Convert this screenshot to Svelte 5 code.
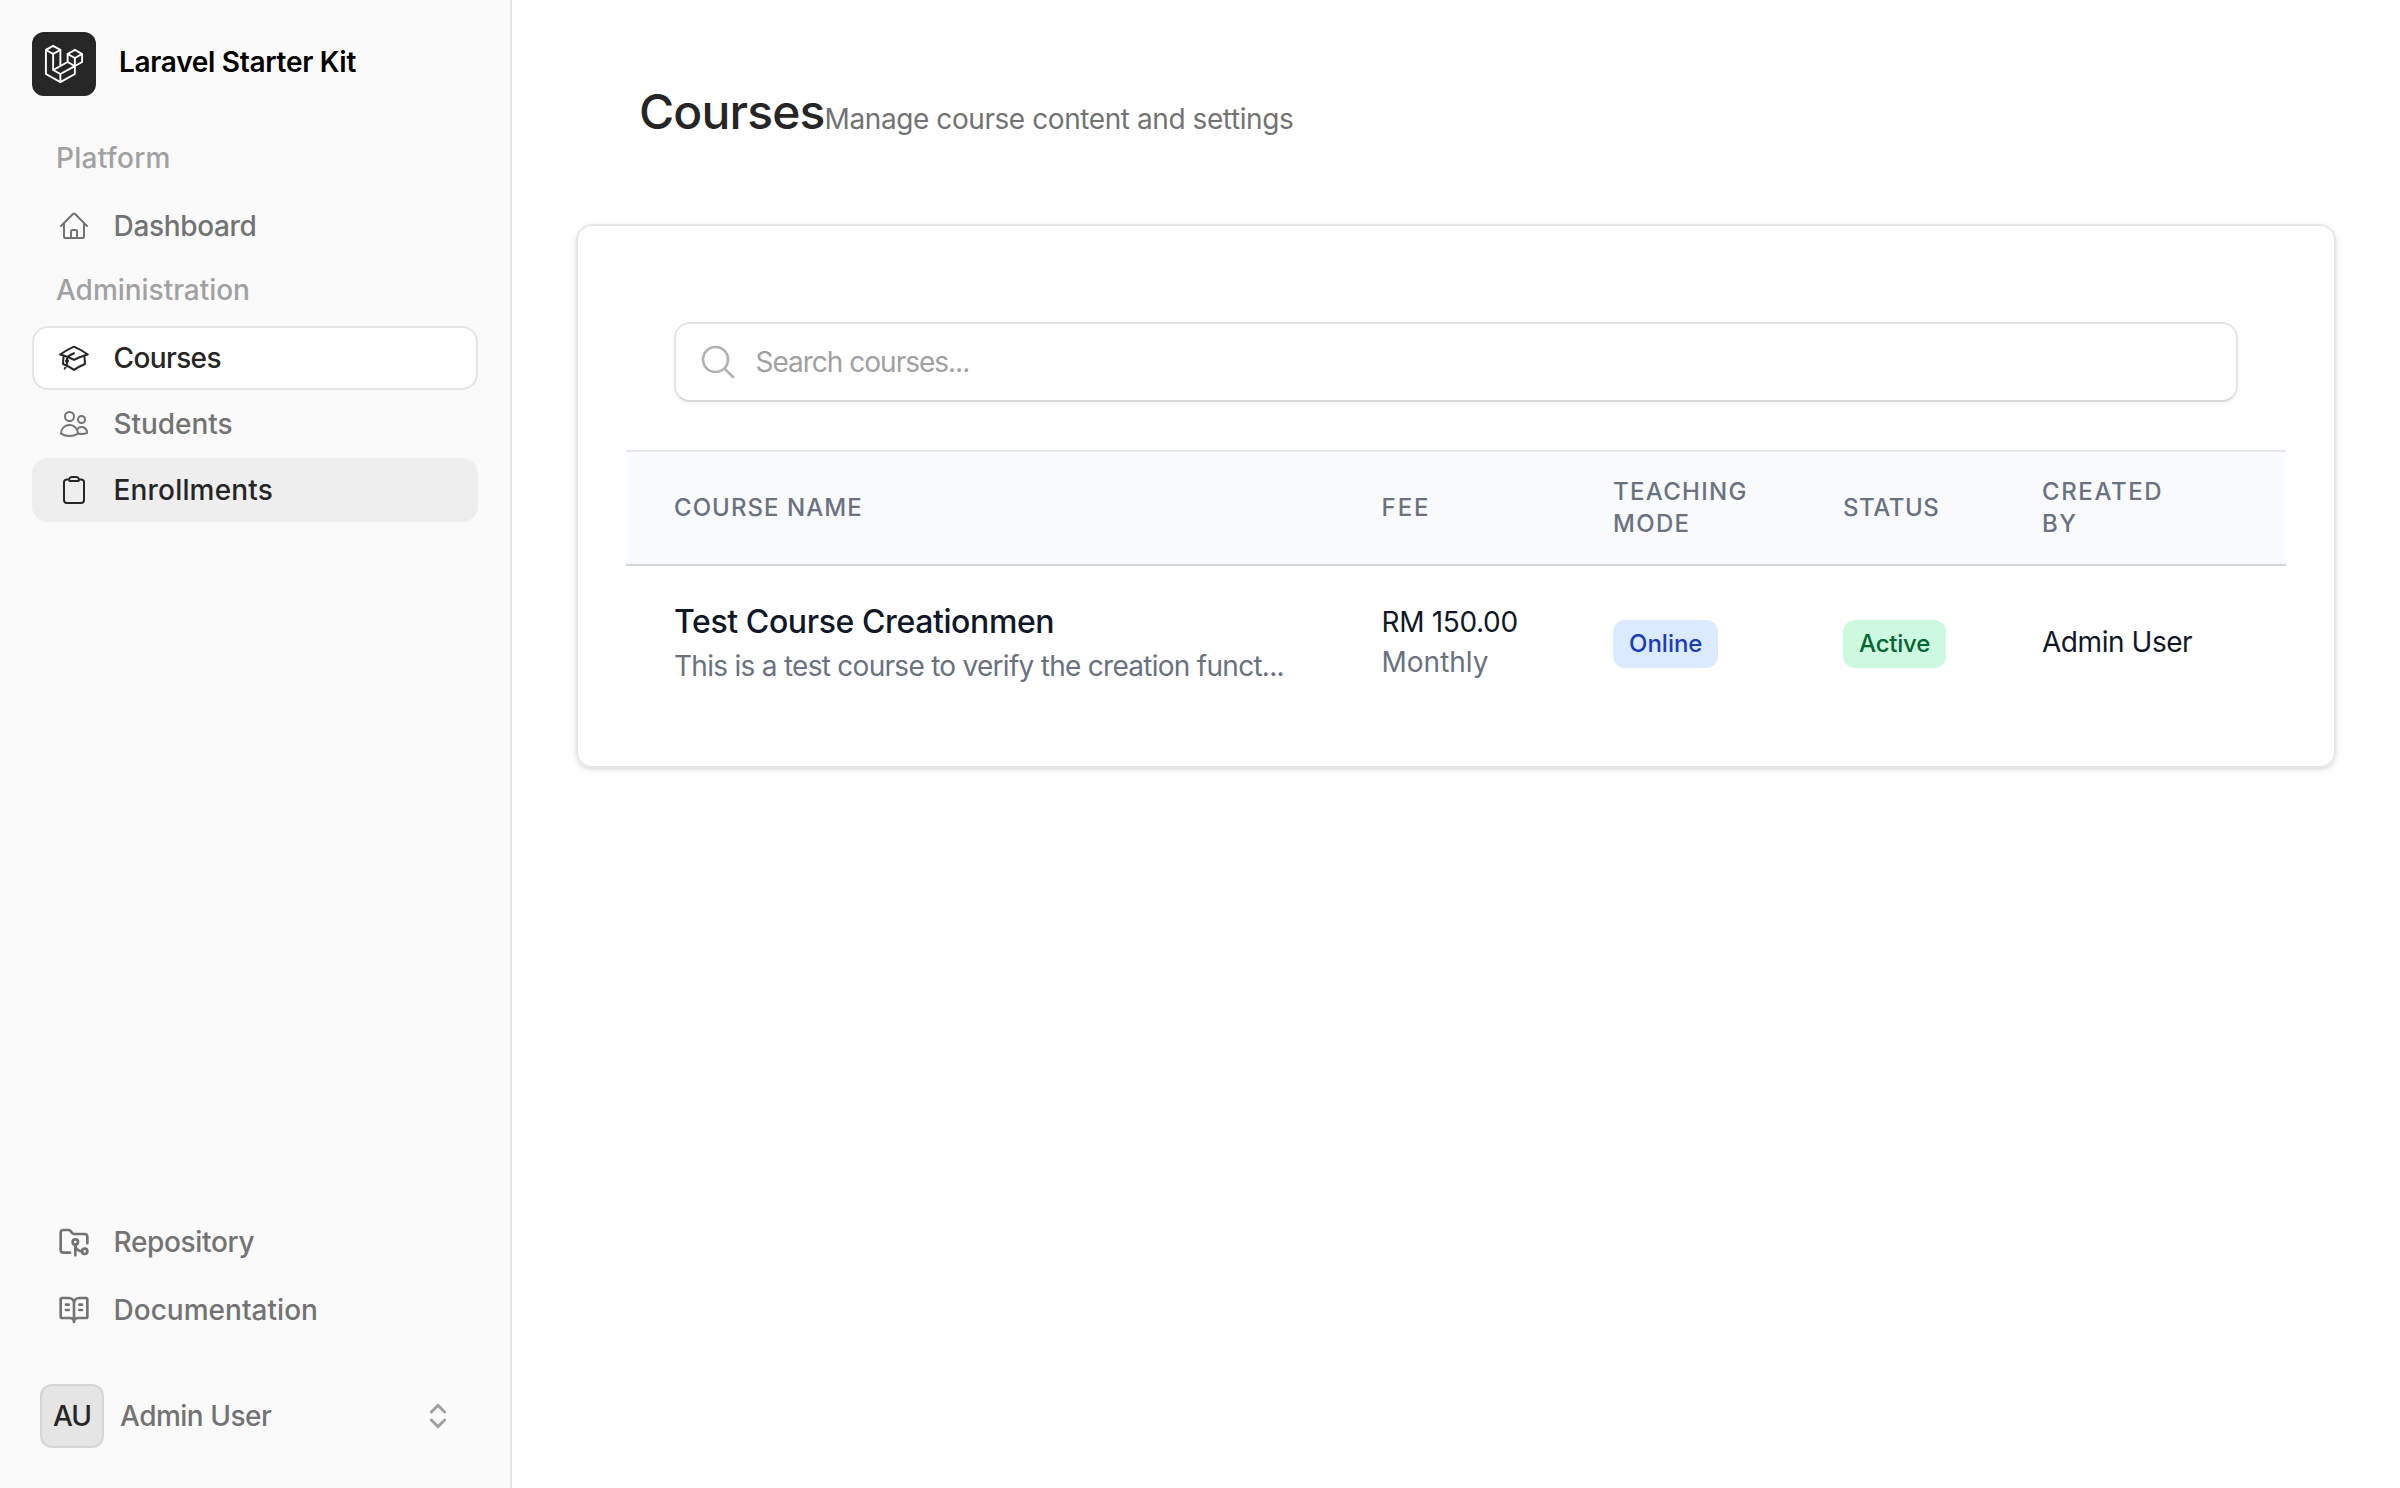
<script>
  const platform = [{ label: 'Dashboard', icon: 'home', track: -0.33 }];
  const administration = [
    { label: 'Courses', icon: 'cap', track: -0.62, state: 'current' },
    { label: 'Students', icon: 'users', track: -0.05 },
    { label: 'Enrollments', icon: 'clipboard', track: 0.18, state: 'hover' }
  ];
  const links = [
    { label: 'Repository', icon: 'folder', track: -0.33 },
    { label: 'Documentation', icon: 'book', track: 0.02 }
  ];
  const columns = [
    { label: 'Course name', track: 1.05 },
    { label: 'Fee', track: 2 },
    { label: 'Teaching mode', track: 1.3 },
    { label: 'Status', track: 0.57 },
    { label: 'Created by', track: 1.6 }
  ];
  const courses = [
    {
      name: 'Test Course Creationmen',
      description: 'This is a test course to verify the creation funct...',
      fee: 'RM 150.00',
      period: 'Monthly',
      mode: 'Online',
      status: 'Active',
      author: 'Admin User'
    }
  ];
</script>

{#snippet icon(name)}
  <svg class="icon" class:lucide={name === 'folder' || name === 'book'} viewBox="0 0 24 24" aria-hidden="true">
    {#if name === 'home'}
      <path d="m2.25 12 8.954-8.955c.44-.439 1.152-.439 1.591 0L21.75 12M4.5 9.75v10.125c0 .621.504 1.125 1.125 1.125H9.75v-4.875c0-.621.504-1.125 1.125-1.125h2.25c.621 0 1.125.504 1.125 1.125V21h4.125c.621 0 1.125-.504 1.125-1.125V9.75M8.25 21h8.25" />
    {:else if name === 'cap'}
      <path d="M4.26 10.147a60.438 60.438 0 0 0-.491 6.347A48.62 48.62 0 0 1 12 20.904a48.62 48.62 0 0 1 8.232-4.41 60.46 60.46 0 0 0-.491-6.347m-15.482 0a50.636 50.636 0 0 0-2.658-.813A59.906 59.906 0 0 1 12 3.493a59.903 59.903 0 0 1 10.399 5.84c-.896.248-1.783.52-2.658.814m-15.482 0A50.717 50.717 0 0 1 12 13.489a50.702 50.702 0 0 1 7.74-3.342M6.75 15a.75.75 0 1 0 0-1.5.75.75 0 0 0 0 1.5Zm0 0v-3.675A55.378 55.378 0 0 1 12 8.443m-7.007 11.55A5.981 5.981 0 0 0 6.75 15.75v-1.5" />
    {:else if name === 'users'}
      <path d="M15 19.128a9.38 9.38 0 0 0 2.625.372 9.337 9.337 0 0 0 4.121-.952 4.125 4.125 0 0 0-7.533-2.493M15 19.128v-.003c0-1.113-.285-2.16-.786-3.07M15 19.128v.106A12.318 12.318 0 0 1 8.624 21c-2.331 0-4.512-.645-6.374-1.766l-.001-.109a6.375 6.375 0 0 1 11.964-3.07M12 6.375a3.375 3.375 0 1 1-6.75 0 3.375 3.375 0 0 1 6.75 0Zm8.25 2.25a2.625 2.625 0 1 1-5.25 0 2.625 2.625 0 0 1 5.25 0Z" />
    {:else if name === 'clipboard'}
      <path d="M15.666 3.888A2.25 2.25 0 0 0 13.5 2.25h-3c-1.03 0-1.9.693-2.166 1.638m7.332 0c.055.194.084.4.084.612v0a.75.75 0 0 1-.75.75H9a.75.75 0 0 1-.75-.75v0c0-.212.03-.418.084-.612m7.332 0c.646.049 1.288.11 1.927.184 1.1.128 1.907 1.077 1.907 2.185V19.5a2.25 2.25 0 0 1-2.25 2.25H6.75A2.25 2.25 0 0 1 4.5 19.5V6.257c0-1.108.806-2.057 1.907-2.185a48.208 48.208 0 0 1 1.927-.184" />
    {:else if name === 'folder'}
      <path d="M9 20H4a2 2 0 0 1-2-2V5a2 2 0 0 1 2-2h3.9a2 2 0 0 1 1.69.9l.81 1.2a2 2 0 0 0 1.67.9H20a2 2 0 0 1 2 2v5" />
      <path d="M18 19c-2.8 0-5-2.2-5-5v8" />
      <circle cx="13" cy="12" r="2" />
      <circle cx="20" cy="19" r="2" />
    {:else if name === 'book'}
      <path d="M12 7v14M16 12h2M16 8h2M6 12h2M6 8h2M3 18a1 1 0 0 1-1-1V4a1 1 0 0 1 1-1h5a4 4 0 0 1 4 4 4 4 0 0 1 4-4h5a1 1 0 0 1 1 1v13a1 1 0 0 1-1 1h-6a3 3 0 0 0-3 3 3 3 0 0 0-3-3z" />
    {/if}
  </svg>
{/snippet}

{#snippet navItem(item)}
  <a class="item {item.state ?? ''}" href="#{item.icon}">
    {@render icon(item.icon)}
    <span style="letter-spacing: {item.track}px">{item.label}</span>
  </a>
{/snippet}

<div class="app">
  <aside>
    <a class="brand" href="#home">
      <span class="logo">
        <svg viewBox="0 0 40 42" aria-hidden="true">
          <path fill="currentColor" fill-rule="evenodd" clip-rule="evenodd" d="M17.2 5.633 8.6.855 0 5.633v26.51l16.2 9 16.2-9v-8.442l7.6-4.223V9.856l-8.6-4.777-8.6 4.777V18.3l-5.6 3.111V5.633ZM38 18.301l-5.6 3.11v-6.157l5.6-3.11V18.3Zm-1.06-7.856-5.54 3.078-5.54-3.079 5.54-3.078 5.54 3.079ZM24.8 18.3v-6.157l5.6 3.111v6.158L24.8 18.3Zm-1 1.732 5.54 3.078-13.14 7.302-5.54-3.078 13.14-7.3v-.002Zm-16.2 7.89 7.6 4.222V38.3L2 30.966V7.92l5.6 3.111v16.892ZM8.6 9.3 3.06 6.222 8.6 3.143l5.54 3.08L8.6 9.3Zm21.8 15.51-13.2 7.334V38.3l13.2-7.334v-6.156ZM9.6 11.034l5.6-3.11v14.6l-5.6 3.11v-14.6Z" />
        </svg>
      </span>
      <span class="brand-name">Laravel Starter Kit</span>
    </a>

    <nav class="main-nav">
      <h2 class="platform">Platform</h2>
      <div class="group">
        {#each platform as item}{@render navItem(item)}{/each}
      </div>
      <h2>Administration</h2>
      <div class="group">
        {#each administration as item}{@render navItem(item)}{/each}
      </div>
    </nav>

    <nav class="links">
      {#each links as item}{@render navItem(item)}{/each}
    </nav>

    <button class="profile">
      <span class="avatar">AU</span>
      <span class="profile-name">Admin User</span>
      <svg class="chevrons" viewBox="0 0 16 26" aria-hidden="true">
        <path d="M1.3 9 8 2.4 14.7 9M1.3 17 8 23.6 14.7 17" />
      </svg>
    </button>
  </aside>

  <main>
    <header>
      <h1>Courses</h1>
      <p>Manage course content and settings</p>
    </header>

    <section class="card">
      <label class="search">
        <svg viewBox="0 0 24 24" aria-hidden="true">
          <path d="m21 21-5.197-5.197m0 0A7.5 7.5 0 1 0 5.196 5.196a7.5 7.5 0 0 0 10.607 10.607Z" />
        </svg>
        <input type="text" placeholder="Search courses..." />
      </label>

      <table>
        <colgroup>
          <col class="c-name" /><col class="c-fee" /><col class="c-mode" /><col class="c-status" /><col />
        </colgroup>
        <thead>
          <tr>
            {#each columns as column}
              <th style="letter-spacing: {column.track}px">{column.label}</th>
            {/each}
          </tr>
        </thead>
        <tbody>
          {#each courses as course}
            <tr>
              <td>
                <div class="name">{course.name}</div>
                <div class="description">{course.description}</div>
              </td>
              <td>
                <div class="fee">{course.fee}</div>
                <div class="period">{course.period}</div>
              </td>
              <td><span class="badge blue">{course.mode}</span></td>
              <td><span class="badge green">{course.status}</span></td>
              <td class="author">{course.author}</td>
            </tr>
          {/each}
        </tbody>
      </table>
    </section>
  </main>
</div>

<style>
  :global(body) {
    margin: 0;
    background: #fff;
  }
  .app {
    display: flex;
    height: 1488px;
    font: 400 28px/40px Inter, sans-serif;
    color: #101828;
  }
  .app * {
    box-sizing: border-box;
  }
  h1, h2, p {
    margin: 0;
  }
  a {
    color: inherit;
    text-decoration: none;
  }

  aside {
    display: flex;
    flex-direction: column;
    flex: none;
    width: 512px;
    padding: 32px;
    border-right: 2px solid #e5e5e5;
    background: #fafafa;
    font-weight: 500;
  }
  .brand {
    display: flex;
    gap: 23px;
    height: 64px;
  }
  .logo {
    display: flex;
    align-items: center;
    justify-content: center;
    width: 64px;
    height: 64px;
    border-radius: 12px;
    background: #262626;
    color: #fff;
  }
  .logo svg {
    width: 40px;
    height: 40px;
  }
  .brand-name {
    padding-top: 10px;
    color: #000;
    font-weight: 600;
    letter-spacing: -0.3px;
  }
  .main-nav {
    flex: 1;
    padding-top: 42px;
  }
  h2 {
    margin: 12px 24px 16px;
    font-size: 28px;
    font-weight: 500;
    letter-spacing: -0.03px;
    color: #a1a1a1;
  }
  h2.platform {
    margin-top: 0;
    letter-spacing: 0.28px;
  }
  .group {
    display: flex;
    flex-direction: column;
    gap: 2px;
  }
  .item {
    display: flex;
    align-items: center;
    gap: 23.5px;
    height: 64px;
    padding: 0 24px;
    border: 2px solid transparent;
    border-radius: 16px;
    color: #737373;
  }
  .item.current {
    border-color: #e5e5e5;
    background: #fff;
    color: #262626;
  }
  .item.hover {
    border-color: #eee;
    background: #eee;
    color: #262626;
  }
  .icon {
    flex: none;
    width: 32px;
    height: 32px;
    fill: none;
    stroke: currentColor;
    stroke-width: 1.5;
    stroke-linecap: round;
    stroke-linejoin: round;
  }
  .icon.lucide {
    stroke-width: 2;
  }
  .links {
    display: flex;
    flex-direction: column;
    gap: 4px;
    margin-bottom: 34px;
  }
  .profile {
    display: flex;
    align-items: center;
    height: 80px;
    padding: 0 32px 0 8px;
    border: 0;
    background: none;
    color: #737373;
    font: inherit;
  }
  .avatar {
    width: 64px;
    height: 64px;
    border: 2px solid #d5d5d5;
    border-radius: 12px;
    background: #e5e5e5;
    color: #262626;
    line-height: 60px;
    text-align: center;
    letter-spacing: -1px;
  }
  .profile-name {
    flex: 1;
    padding-left: 16px;
    text-align: left;
    letter-spacing: -0.5px;
  }
  .chevrons {
    width: 16px;
    height: 26px;
    fill: none;
    stroke: #a1a1a1;
    stroke-width: 3;
    stroke-linejoin: round;
    stroke-linecap: round;
  }

  main {
    flex: 1;
    padding: 0 64px;
  }
  header {
    display: flex;
    align-items: baseline;
    height: 224px;
    padding: 82px 0 0 63px;
  }
  h1 {
    font-size: 48px;
    font-weight: 500;
    line-height: 60px;
    letter-spacing: -0.85px;
    color: #262626;
  }
  header p {
    letter-spacing: -0.42px;
    color: #737373;
  }
  .card {
    height: 544px;
    padding: 96px 48px 48px;
    border: 2px solid #e5e7eb;
    border-radius: 16px;
    box-shadow: 0 2px 6px rgb(0 0 0 / 0.1), 0 2px 4px -2px rgb(0 0 0 / 0.1);
  }
  .search {
    display: flex;
    align-items: center;
    gap: 17.5px;
    height: 80px;
    margin: 0 48px 48px;
    padding: 0 22px;
    border: 2px solid #e5e5e5;
    border-bottom-color: #d9d9d9;
    border-radius: 16px;
    box-shadow: 0 2px 4px rgb(0 0 0 / 0.05);
  }
  .search svg {
    width: 40px;
    height: 40px;
    fill: none;
    stroke: #b2b2b2;
    stroke-width: 1.6;
    stroke-linecap: round;
  }
  .search input {
    flex: 1;
    padding: 0;
    border: 0;
    outline: 0;
    background: none;
    font: inherit;
    letter-spacing: -1px;
  }
  .search input::placeholder {
    color: #a1a1a1;
    opacity: 1;
  }
  table {
    width: 100%;
    table-layout: fixed;
    border-collapse: separate;
    border-spacing: 0;
  }
  .c-name {
    width: 707.5px;
  }
  .c-fee {
    width: 231.5px;
  }
  .c-mode {
    width: 230px;
  }
  .c-status {
    width: 199px;
  }
  th {
    height: 116px;
    padding: 0 48px;
    border-top: 2px solid #e5e7eb;
    border-bottom: 2px solid #d1d5dc;
    background: #f9fafb;
    color: #6a7282;
    font-size: 24px;
    font-weight: 500;
    line-height: 32px;
    text-align: left;
    text-transform: uppercase;
  }
  th:last-child {
    padding-right: 96px;
  }
  td {
    height: 152px;
    padding: 0 48px;
    white-space: nowrap;
  }
  .name {
    font-size: 32px;
    font-weight: 500;
    line-height: 48px;
    letter-spacing: -0.4px;
  }
  .description {
    letter-spacing: -0.72px;
    color: #6a7282;
  }
  .fee {
    letter-spacing: -0.33px;
  }
  .period {
    letter-spacing: 0;
    color: #6a7282;
  }
  .badge {
    display: block;
    width: max-content;
    height: 48px;
    margin-top: 4px;
    padding: 0 16px;
    border-radius: 12px;
    font-size: 24px;
    font-weight: 500;
    line-height: 47px;
  }
  .blue {
    background: #dbeafe;
    color: #193cb8;
    letter-spacing: 0;
  }
  .green {
    background: #cef9e1;
    color: #016630;
    letter-spacing: -0.2px;
  }
  .author {
    letter-spacing: -0.45px;
  }
</style>
